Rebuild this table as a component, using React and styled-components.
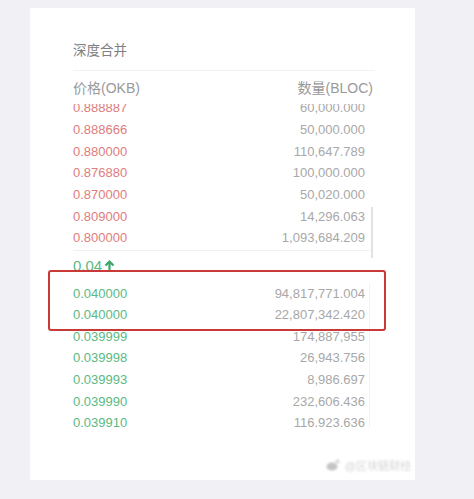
import React from "react";
import styled, { createGlobalStyle } from "styled-components";

const asks = [
  ["0.888887", "60,000.000"],
  ["0.888666", "50,000.000"],
  ["0.880000", "110,647.789"],
  ["0.876880", "100,000.000"],
  ["0.870000", "50,020.000"],
  ["0.809000", "14,296.063"],
  ["0.800000", "1,093,684.209"],
];

const bids = [
  ["0.040000", "94,817,771.004"],
  ["0.040000", "22,807,342.420"],
  ["0.039999", "174,887,955"],
  ["0.039998", "26,943.756"],
  ["0.039993", "8,986.697"],
  ["0.039990", "232,606.436"],
  ["0.039910", "116,923.636"],
];

const App = () => {
  return (
    <>
      <GlobalStyle />
      <Page>
        <Card>
          <Title>深度合并</Title>
          <Divider />
          <HeaderRow>
            <span>价格(OKB)</span>
            <span>数量(BLOC)</span>
          </HeaderRow>
          <Book>
            <List $from="end" $height={145}>
              {asks.map(([price, amount], i) => (
                <Row key={i}>
                  <Price $side="ask">{price}</Price>
                  <Amount>{amount}</Amount>
                </Row>
              ))}
            </List>
            <Thumb />
          </Book>
          <Divider $soft />
          <LastPrice>
            0.04
            <svg width="11" height="13" viewBox="0 0 11 13">
              <path
                d="M5.5 12.5V2.5M1.5 6.5L5.5 2.5L9.5 6.5"
                fill="none"
                stroke="#3ea66a"
                strokeWidth="2.2"
              />
            </svg>
          </LastPrice>
          <Book>
            <List $from="start" $height={144}>
              {bids.map(([price, amount], i) => (
                <Row key={i}>
                  <Price $side="bid">{price}</Price>
                  <Amount>{amount}</Amount>
                </Row>
              ))}
            </List>
            <Track />
          </Book>
          <Highlight />
          <Watermark>
            <svg width="14" height="12" viewBox="0 0 14 12">
              <ellipse cx="6" cy="7.5" rx="5.5" ry="4" fill="#c4c4c4" />
              <circle cx="11.5" cy="2.5" r="2" fill="#d4d4d4" />
            </svg>
            <span>@区块链财经</span>
          </Watermark>
        </Card>
      </Page>
    </>
  );
};

const GlobalStyle = createGlobalStyle`
  body {
    margin: 0;
    background: #f0f0f5;
    font-family: "Liberation Sans", "Noto Sans CJK SC", sans-serif;
  }
`;

const Page = styled.div`
  width: 474px;
  height: 499px;
  padding: 8px 0 0 30px;
  box-sizing: border-box;
`;

const Card = styled.div`
  position: relative;
  width: 385px;
  height: 472px;
  background: #fff;
  padding: 33px 0 0 43px;
  box-sizing: border-box;
`;

const Title = styled.div`
  width: 302px;
  height: 20px;
  line-height: 20px;
  font-size: 13.5px;
  color: #808080;
  margin-bottom: 9px;
`;

const Divider = styled.div`
  width: ${(p) => (p.$soft ? "297px" : "302px")};
  height: 1px;
  margin-top: ${(p) => (p.$soft ? "1px" : "0")};
  background: ${(p) => (p.$soft ? "#f0f0f0" : "#f2f2f2")};
`;

const HeaderRow = styled.div`
  width: 300px;
  height: 20px;
  margin-top: 7px;
  margin-bottom: 6px;
  line-height: 20px;
  display: flex;
  justify-content: space-between;
  font-size: 14px;
  color: #999;
`;

const Book = styled.div`
  position: relative;
  width: 300px;
`;

const List = styled.div`
  height: ${(p) => p.$height}px;
  overflow: hidden;
  display: flex;
  flex-direction: column;
  justify-content: ${(p) => (p.$from === "end" ? "flex-end" : "flex-start")};
  padding-right: 8px;
`;

const Row = styled.div`
  flex: none;
  height: 21.67px;
  line-height: 21.67px;
  display: flex;
  justify-content: space-between;
  font-size: 13px;
`;

const Price = styled.span`
  color: ${(p) => (p.$side === "ask" ? "#e07d7d" : "#5cb97f")};
`;

const Amount = styled.span`
  color: #a8a8a8;
`;

const Thumb = styled.div`
  position: absolute;
  left: 298px;
  top: 103px;
  width: 2px;
  height: 51px;
  background: #e2e2e2;
`;

const Track = styled.div`
  position: absolute;
  left: 296px;
  top: 0;
  width: 1px;
  height: 144px;
  background: #f2f2f2;
`;

const LastPrice = styled.div`
  height: 31.5px;
  display: flex;
  align-items: center;
  gap: 2px;
  font-size: 15px;
  color: #5cb97f;
  padding-bottom: 3px;
  box-sizing: border-box;
`;

const Highlight = styled.div`
  position: absolute;
  left: 18px;
  top: 262px;
  width: 338px;
  height: 61px;
  border: 2.5px solid #c93a36;
  border-radius: 3px;
  box-sizing: border-box;
`;

const Watermark = styled.div`
  position: absolute;
  right: 4px;
  bottom: 7px;
  display: flex;
  align-items: center;
  gap: 5px;
  font-size: 11px;
  color: #d4d4d4;
  filter: blur(0.8px);
`;

export default App;
